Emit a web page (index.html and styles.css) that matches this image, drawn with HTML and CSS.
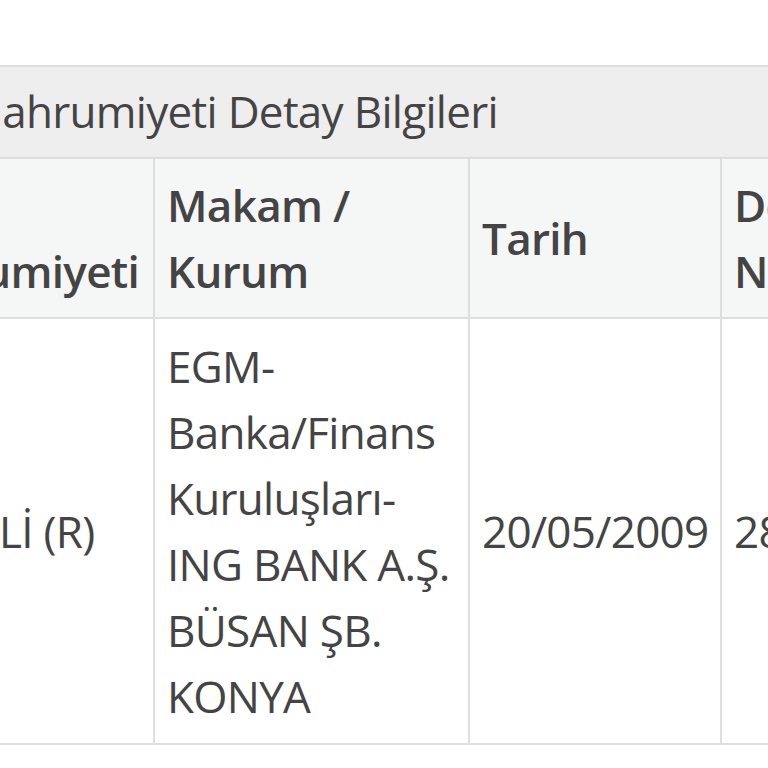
FILE: index.html
```html
<!DOCTYPE html>
<html lang="tr">
<head>
<meta charset="utf-8">
<title>Araç Mahrumiyeti Detay Bilgileri</title>
<link rel="stylesheet" href="styles.css">
</head>
<body>
<div class="panel">
  <div class="panel-title">Araç Mahrumiyeti Detay Bilgileri</div>
  <table class="grid">
    <colgroup>
      <col class="c1">
      <col class="c2">
      <col class="c3">
      <col class="c4">
      <col class="c5">
    </colgroup>
    <thead>
      <tr>
        <th>Araç Mahrumiyeti</th>
        <th>Makam / Kurum</th>
        <th>Tarih</th>
        <th>Dosya No</th>
        <th>Açıklama</th>
      </tr>
    </thead>
    <tbody>
      <tr>
        <td>REHİNLİ (R)</td>
        <td>EGM-Banka/Finans Kuruluşları-ING BANK A.Ş. BÜSAN ŞB. KONYA</td>
        <td>20/05/2009</td>
        <td>28491</td>
        <td>-</td>
      </tr>
    </tbody>
  </table>
</div>
</body>
</html>
```

FILE: styles.css
```css
html, body {
  margin: 0;
  padding: 0;
  background: #ffffff;
  overflow: hidden;
}

body {
  font-family: "Open Sans", "Noto Sans", sans-serif;
  color: #444444;
  font-size: 44px;
  line-height: 66px;
  letter-spacing: -0.7px;
}

.panel {
  margin-top: 65px;
  margin-left: -139px;
  width: 1400px;
  border-top: 2px solid #dedede;
}

.panel-title {
  background: #eeeeee;
  padding: 11px 13px 13px 3px;
  border-bottom: 2px solid #dedede;
  white-space: nowrap;
}

.grid {
  table-layout: fixed;
  border-collapse: separate;
  border-spacing: 0;
  width: 1400px;
}

.c1 { width: 294px; }
.c2 { width: 315px; }
.c3 { width: 252px; }
.c4 { width: 210px; }
.c5 { width: 329px; }

.grid th,
.grid td {
  border-right: 2px solid #dedede;
  border-bottom: 2px solid #dedede;
  padding: 13px 12px;
  text-align: left;
  vertical-align: middle;
}

.grid th {
  background: #f5f6f6;
  font-weight: 600;
}

.grid td {
  background: #ffffff;
  font-weight: 400;
  padding-top: 14px;
  padding-bottom: 14px;
}
```
